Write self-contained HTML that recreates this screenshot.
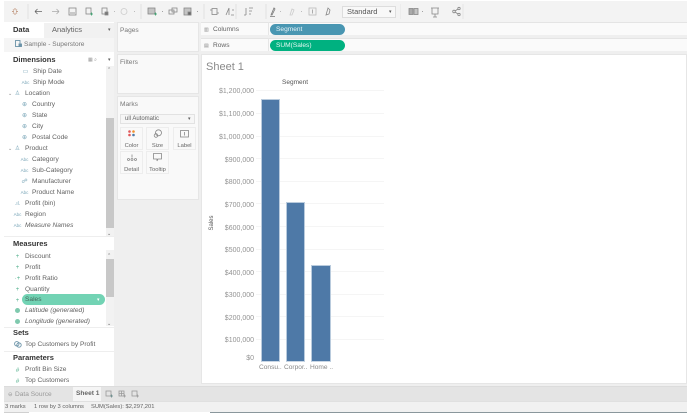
<!DOCTYPE html>
<html><head><meta charset="utf-8"><style>
html,body{margin:0;padding:0;background:#fff}
#p{position:relative;width:687px;height:413px;overflow:hidden;background:#fff;font-family:"Liberation Sans",sans-serif;font-size:6.6px;color:#626262;filter:blur(.3px)}
#p div{position:absolute;box-sizing:border-box;white-space:nowrap}
.t{line-height:10px;height:10px;margin-top:1px}
.h{font-weight:bold;font-size:7.5px;color:#333;line-height:10px;height:10px;margin-top:1px}
.i{font-style:italic}
.c{width:9px;text-align:center;line-height:10px;height:10px;font-size:6px;color:#7aa6b8;margin-top:1px}
.g{color:#4fae8a}
.a{right:433px;text-align:right;line-height:10px;height:10px;color:#939393;font-size:7px;margin-top:4px}
.l{left:256px;width:128px;height:1px;background:#f5f5f5}
.b{background:#4e79a7;border:1px solid #b9cbdd;border-bottom-color:#c9d6e4}
.m{width:23px;height:23px;background:#f9f9f9;border:1px solid #ededed;text-align:center;font-size:5.8px;padding-top:15px;line-height:7px;color:#666}
svg{position:absolute}
</style></head><body><div id="p">
<div style="left:0;top:1px;width:687px;height:21px;background:#f3f3f3"></div>
<div style="left:0;top:22px;width:687px;height:364px;background:#efefef"></div>
<div style="left:0;top:0;width:4px;height:413px;background:#fff"></div>
<svg style="left:0;top:0" width="340" height="22" fill="none" stroke="#888" stroke-width="0.8">
<path d="M15 8v2M15 13v2M12 11.500h2M16 11.500h2M13 9.500l1 1M16 12.500l1 1M17 9.500l-1 1M14 12.500l-1 1" stroke="#b9886c"/>
<path d="M35 11.500h7M35 11.500l2.500-2.500M35 11.500l2.500 2.500" stroke="#666"/>
<path d="M52 11.500h7M59 11.500l-2.500-2.500M59 11.500l-2.500 2.500" stroke="#aaa"/>
<rect x="69" y="8" width="7" height="7"/><path d="M70 13h5"/>
<rect x="86" y="8" width="5" height="6"/><path d="M90 14h3M91.500 12.500v3" stroke="#396"/>
<rect x="102" y="8" width="5" height="6"/><rect x="105" y="12" width="3" height="3" fill="#777"/>
<path d="M114 11.500h1M134 11.500h1" stroke="#aaa"/>
<circle cx="124" cy="11.500" r="3" stroke="#ccc"/>
<path d="M141 4v15M236 4v15" stroke="#ddd"/><path d="M28 4v15" stroke="#ddd"/>
<rect x="148" y="8" width="7" height="6" fill="#c4c4c4"/><path d="M154 14h3M155.500 12.500v3" stroke="#396"/><path d="M162 11.500h1"/>
<rect x="169" y="10" width="5" height="4"/><rect x="172" y="8" width="5" height="4"/>
<rect x="184" y="8" width="7" height="7" fill="#c4c4c4"/><rect x="188" y="12" width="3" height="3" fill="#666"/><path d="M197 11.500h1"/>
<path d="M204 4v15" stroke="#ddd"/>
<rect x="212" y="8.500" width="5" height="6"/><path d="M210 10h2M217 13h2"/>
<path d="M229 8v7M226 15l3-7M231 15h3M232 10h2"/>
<path d="M246 8v7M246 15h-2M249 8h4M249 11h3M249 14h2"/>
<path d="M266 4v15" stroke="#ddd"/>
<path d="M271 15l3-7 1 1-3 6zM270 16.500h5" stroke="#777"/>
<path d="M280 11.500h1M301 11.500h1" stroke="#aaa"/>
<path d="M290 15l2-6 2 1-2 5z" stroke="#ccc"/>
<rect x="309" y="8" width="7" height="7" stroke="#bbb"/><path d="M312.500 9.500v4" stroke="#999"/>
<path d="M328 8l2 2-1 4-3 1z" stroke="#888"/>
</svg>
<div style="left:342px;top:6px;width:54px;height:12px;background:#f8f8f8;border:1px solid #ddd;font-size:7.5px;line-height:10px;padding-left:4px;color:#555">Standard<span style="position:absolute;left:46px;top:0;font-size:5px">▾</span></div>
<svg style="left:400px;top:0" width="70" height="22" fill="none" stroke="#888" stroke-width="0.8">
<path d="M3 4v15M66 4v15" stroke="#e0e0e0" transform="translate(-3 0)"/>
<rect x="9" y="8.500" width="4" height="6" fill="#aaa"/><rect x="14" y="8.500" width="4" height="6" fill="#c4c4c4"/><path d="M22 11.500h1"/>
<path d="M31 8h8M32 8v6h6V8M35 14v3M33 17h4"/>
<circle cx="54" cy="11.500" r="1.300"/><circle cx="59" cy="8.500" r="1.200"/><circle cx="59" cy="14.500" r="1.200"/><path d="M55 11l3-2M55 12l3 2"/>
</svg>

<!-- left panel -->
<div style="left:4px;top:22px;width:110px;height:364px;background:#fff"></div>
<div style="left:44px;top:23px;width:70px;height:15px;background:#f1f1f1"></div>
<div style="left:4px;top:38px;width:110px;height:14px;background:#f5f5f5"></div>
<div class="h" style="left:13px;top:24px">Data</div>
<div class="t" style="left:52px;top:24px;font-size:7.500px">Analytics</div>
<div class="t" style="left:108px;top:24px;font-size:5px">▾</div>
<svg style="left:15px;top:40px" width="8" height="8" fill="none" stroke="#6b93a8" stroke-width="0.9"><rect x="0.500" y="0.500" width="4.500" height="6"/><rect x="4" y="4" width="2.500" height="2.500" fill="#6b93a8"/></svg>
<div class="t" style="left:24px;top:39px;color:#777">Sample - Superstore</div>
<div class="h" style="left:13px;top:54px">Dimensions</div>
<div class="t" style="left:88px;top:54px;font-size:5px;color:#999">▦ ⌕</div>
<div class="t" style="left:108px;top:54px;font-size:5px">▾</div>

<div class="c" style="left:21px;top:66px">▭</div><div class="t" style="left:33px;top:66px">Ship Date</div>
<div class="c" style="left:21px;top:77px;font-size:4.500px">Abc</div><div class="t" style="left:33px;top:77px">Ship Mode</div>
<div class="t" style="left:8px;top:88px;font-size:5px;color:#888">⌄</div><div class="c" style="left:13px;top:88px">♙</div><div class="t" style="left:25px;top:88px">Location</div>
<div class="c" style="left:20px;top:99px">⊕</div><div class="t" style="left:32px;top:99px">Country</div>
<div class="c" style="left:20px;top:110px">⊕</div><div class="t" style="left:32px;top:110px">State</div>
<div class="c" style="left:20px;top:121px">⊕</div><div class="t" style="left:32px;top:121px">City</div>
<div class="c" style="left:20px;top:132px">⊕</div><div class="t" style="left:32px;top:132px">Postal Code</div>
<div class="t" style="left:8px;top:143px;font-size:5px;color:#888">⌄</div><div class="c" style="left:13px;top:143px">♙</div><div class="t" style="left:25px;top:143px">Product</div>
<div class="c" style="left:20px;top:154px;font-size:4.500px">Abc</div><div class="t" style="left:32px;top:154px">Category</div>
<div class="c" style="left:20px;top:165px;font-size:4.500px">Abc</div><div class="t" style="left:32px;top:165px">Sub-Category</div>
<div class="c" style="left:20px;top:176px">☍</div><div class="t" style="left:32px;top:176px">Manufacturer</div>
<div class="c" style="left:20px;top:187px;font-size:4.500px">Abc</div><div class="t" style="left:32px;top:187px">Product Name</div>
<div class="c" style="left:13px;top:198px;font-size:5px">.ıl.</div><div class="t" style="left:25px;top:198px">Profit (bin)</div>
<div class="c" style="left:13px;top:209px;font-size:4.500px">Abc</div><div class="t" style="left:25px;top:209px">Region</div>
<div class="c" style="left:13px;top:220px;font-size:4.500px">Abc</div><div class="t i" style="left:25px;top:220px">Measure Names</div>

<!-- scrollbars -->
<div style="left:106px;top:66px;width:8px;height:170px;background:#f2f2f2"></div>
<div style="left:106px;top:118px;width:8px;height:110px;background:#c8c8c8"></div>
<div class="t" style="left:107px;top:64px;font-size:5px;color:#666">⌃</div>
<div class="t" style="left:107px;top:228px;font-size:5px;color:#666">⌄</div>
<div style="left:4px;top:236px;width:110px;height:1px;background:#eee"></div>

<div class="h" style="left:13px;top:238px">Measures</div>
<div style="left:106px;top:250px;width:8px;height:76px;background:#f2f2f2"></div>
<div style="left:106px;top:259px;width:8px;height:38px;background:#c8c8c8"></div>
<div class="t" style="left:107px;top:250px;font-size:5px;color:#666">⌃</div>
<div class="t" style="left:107px;top:318px;font-size:5px;color:#666">⌄</div>

<div class="c g" style="left:13px;top:251px">+</div><div class="t" style="left:25px;top:251px">Discount</div>
<div class="c g" style="left:13px;top:262px">+</div><div class="t" style="left:25px;top:262px">Profit</div>
<div class="c g" style="left:13px;top:273px">·+</div><div class="t" style="left:25px;top:273px">Profit Ratio</div>
<div class="c g" style="left:13px;top:284px">+</div><div class="t" style="left:25px;top:284px">Quantity</div>
<div class="c g" style="left:13px;top:295px">+</div>
<div style="left:22px;top:294px;width:83px;height:11px;border-radius:6px;background:#72d3b4"></div>
<div class="t" style="left:25px;top:294px;color:#44695c">Sales</div>
<div class="t" style="left:97px;top:294px;font-size:5px;color:#fff">▾</div>
<div style="left:15px;top:308px;width:5px;height:5px;border-radius:50%;background:#7fc9ae"></div><div class="t i" style="left:25px;top:305px">Latitude (generated)</div>
<div style="left:15px;top:319px;width:5px;height:5px;border-radius:50%;background:#7fc9ae"></div><div class="t i" style="left:25px;top:316px">Longitude (generated)</div>
<div style="left:4px;top:327px;width:110px;height:1px;background:#eee"></div>
<div class="h" style="left:13px;top:327px">Sets</div>
<svg style="left:14px;top:341px" width="8" height="7" fill="none" stroke="#6b93a8" stroke-width="0.9"><circle cx="2.800" cy="2.800" r="2.200"/><circle cx="5" cy="4" r="2.200"/></svg>
<div class="t" style="left:25px;top:339px">Top Customers by Profit</div>
<div style="left:4px;top:351px;width:110px;height:1px;background:#eee"></div>
<div class="h" style="left:13px;top:352px">Parameters</div>
<div class="c g" style="left:13px;top:365px">#</div><div class="t" style="left:25px;top:364px">Profit Bin Size</div>
<div class="c g" style="left:13px;top:376px">#</div><div class="t" style="left:25px;top:375px">Top Customers</div>

<!-- cards -->
<div style="left:117px;top:22px;width:82px;height:30px;background:#f9f9f9;border:1px solid #e6e6e6"></div>
<div class="t" style="left:120px;top:25px;color:#777">Pages</div>
<div style="left:117px;top:54px;width:82px;height:40px;background:#f9f9f9;border:1px solid #e6e6e6"></div>
<div class="t" style="left:120px;top:57px;color:#777">Filters</div>
<div style="left:117px;top:96px;width:82px;height:104px;background:#f9f9f9;border:1px solid #e6e6e6"></div>
<div class="t" style="left:120px;top:99px;color:#777">Marks</div>
<div style="left:120px;top:114px;width:75px;height:10px;background:#f6f6f6;border:1px solid #e2e2e2;line-height:8px;padding-left:4px;font-size:6px">ull Automatic<span style="position:absolute;left:67px;top:0;font-size:5px">▾</span></div>

<div class="m" style="left:120px;top:127px">Color</div>
<svg style="left:128px;top:130px" width="8" height="8"><circle cx="1.500" cy="1.500" r="1.300" fill="#e15759"/><circle cx="5.500" cy="1.500" r="1.300" fill="#f28e2b"/><circle cx="1.500" cy="5" r="1.300" fill="#e15759"/><circle cx="5.500" cy="5" r="1.300" fill="#4e79a7"/></svg>
<div class="m" style="left:146px;top:127px">Size</div>
<svg style="left:153px;top:129px" width="10" height="10" fill="none" stroke="#888" stroke-width="0.8"><circle cx="5.500" cy="3.800" r="3"/><circle cx="3" cy="6.500" r="1.800"/></svg>
<div class="m" style="left:173px;top:127px">Label</div>
<svg style="left:180px;top:130px" width="10" height="8" fill="none" stroke="#888" stroke-width="0.8"><rect x="0.500" y="0.500" width="8" height="6.500"/><path d="M4.500 2v3.500"/></svg>
<div class="m" style="left:120px;top:151px">Detail</div>
<svg style="left:127px;top:154px" width="10" height="8" fill="none" stroke="#888" stroke-width="0.8"><circle cx="1.500" cy="5.500" r="1"/><circle cx="5" cy="5.500" r="1"/><circle cx="8.500" cy="5.500" r="1"/><path d="M5 0.500v3"/></svg>
<div class="m" style="left:146px;top:151px">Tooltip</div>
<svg style="left:153px;top:153px" width="10" height="9" fill="none" stroke="#888" stroke-width="0.8"><path d="M.5.500h8v5.500h-3.500l-1 2v-2h-3.500z"/></svg>

<!-- shelves -->
<div style="left:201px;top:22px;width:486px;height:13px;background:#fafafa;border-top:1px solid #e4e4e4"></div>
<div style="left:201px;top:38px;width:486px;height:13px;background:#fafafa;border-top:1px solid #e4e4e4"></div>
<div class="t" style="left:204px;top:24px;font-size:5px;color:#888">▥</div><div class="t" style="left:213px;top:24px">Columns</div>
<div class="t" style="left:204px;top:40px;font-size:5px;color:#888">▤</div><div class="t" style="left:213px;top:40px">Rows</div>
<div style="left:268px;top:22px;width:1px;height:13px;background:#e6e6e6"></div>
<div style="left:268px;top:38px;width:1px;height:13px;background:#e6e6e6"></div>
<div style="left:270px;top:24px;width:75px;height:11px;border-radius:6px;background:#4996b2;color:#e6f3f7;line-height:11px;padding-left:6px">Segment</div>
<div style="left:270px;top:40px;width:75px;height:11px;border-radius:6px;background:#00b180;color:#e3f7f1;line-height:11px;padding-left:6px">SUM(Sales)</div>

<!-- sheet -->
<div style="left:201px;top:54px;width:486px;height:330px;background:#fff;border:1px solid #e6e6e6"></div>
<div style="left:206px;top:60px;font-size:11px;line-height:14px;color:#8a8a8a">Sheet 1</div>
<div style="left:282px;top:78px;font-size:6.500px;line-height:10px;color:#555">Segment</div>
<div class="l" style="top:90px"></div><div class="l" style="top:113px"></div><div class="l" style="top:136px"></div><div class="l" style="top:158px"></div><div class="l" style="top:181px"></div><div class="l" style="top:203px"></div><div class="l" style="top:226px"></div><div class="l" style="top:249px"></div><div class="l" style="top:271px"></div><div class="l" style="top:294px"></div><div class="l" style="top:316px"></div><div class="l" style="top:339px"></div>
<div class="a" style="top:83px">$1,200,000</div>
<div class="a" style="top:106px">$1,100,000</div>
<div class="a" style="top:129px">$1,000,000</div>
<div class="a" style="top:152px">$900,000</div>
<div class="a" style="top:174px">$800,000</div>
<div class="a" style="top:197px">$700,000</div>
<div class="a" style="top:220px">$600,000</div>
<div class="a" style="top:242px">$500,000</div>
<div class="a" style="top:265px">$400,000</div>
<div class="a" style="top:287px">$300,000</div>
<div class="a" style="top:310px">$200,000</div>
<div class="a" style="top:332px">$100,000</div>
<div class="a" style="top:350px">$0</div>
<div style="left:204px;top:219px;font-size:6px;line-height:8px;color:#555;transform:rotate(-90deg);transform-origin:center;width:16px;text-align:center">Sales</div>
<div class="b" style="left:261px;top:99px;width:19px;height:263px"></div>
<div class="b" style="left:286px;top:202px;width:19px;height:160px"></div>
<div class="b" style="left:311px;top:265px;width:20px;height:97px"></div>
<div class="t" style="left:259px;top:362px;color:#888">Consu..</div>
<div class="t" style="left:284px;top:362px;color:#888">Corpor..</div>
<div class="t" style="left:310px;top:362px;color:#888">Home ..</div>

<!-- bottom -->
<div style="left:4px;top:386px;width:683px;height:16px;background:#e4e4e4;border-top:1px solid #dcdcdc"></div>
<div style="left:4px;top:401px;width:683px;height:11px;background:#f1f1f1;border-top:1px solid #e0e0e0"></div>
<div class="t" style="left:8px;top:389px;font-size:5.500px;color:#999">⊖</div><div class="t" style="left:15px;top:389px;color:#999">Data Source</div>
<div style="left:73px;top:387px;width:28px;height:14px;background:#f5f5f5"></div>
<div class="t" style="left:76px;top:388px;font-weight:bold;color:#666">Sheet 1</div>
<svg style="left:105px;top:390px" width="36" height="8" fill="none" stroke="#999" stroke-width="0.8"><rect x="1" y="1" width="5" height="5"/><path d="M5 6h3M6.500 4.500v3" stroke="#688"/><rect x="14" y="1" width="5" height="5"/><path d="M16.500 1v5M14 3.500h5M18 6h3M19.500 4.500v3"/><rect x="27" y="1" width="5" height="5"/><path d="M31 6h3M32.500 4.500v3"/></svg>
<div class="t" style="left:5px;top:401px;font-size:5.800px">3 marks</div>
<div class="t" style="left:34px;top:401px;font-size:5.800px">1 row by 3 columns</div>
<div class="t" style="left:91px;top:401px;font-size:5.800px">SUM(Sales): $2,297,201</div>
<div style="left:4px;top:412px;width:25px;height:1px;background:#d0d0d0"></div>
<div style="left:210px;top:412px;width:477px;height:1px;background:#8a979c"></div>
</div></body></html>
